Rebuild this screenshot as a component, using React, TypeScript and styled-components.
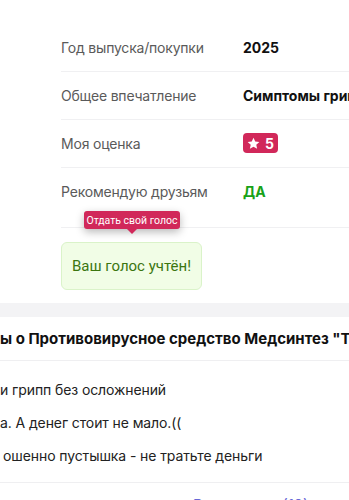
import React from "react";
import styled, { createGlobalStyle } from "styled-components";

const GlobalStyle = createGlobalStyle`
  html, body {
    margin: 0;
    padding: 0;
    background: #ffffff;
    overflow: hidden;
  }
  body {
    font-family: Inter, "Noto Sans", Arial, sans-serif;
    color: #1a1a1a;
  }
  * { box-sizing: border-box; }
`;

const Page = styled.div`
  width: 349px;
  height: 500px;
  overflow: hidden;
`;

const InfoSection = styled.section`
  padding: 24px 0 0 61px;
`;

const Row = styled.div<{ $pb?: number }>`
  display: grid;
  grid-template-columns: 182px 1fr;
  align-items: center;
  height: ${(p) => 48 + (p.$pb ?? 0)}px;
  padding-bottom: ${(p) => p.$pb ?? 0}px;
  border-bottom: 1px solid #f0f0f2;
  white-space: nowrap;
  overflow: hidden;
`;

const Label = styled.span`
  font-size: 14px;
  letter-spacing: -0.2px;
  color: #5a5a5a;
`;

const Value = styled.span<{ $color?: string }>`
  font-size: 14px;
  font-weight: 700;
  color: ${(p) => p.$color ?? "#111"};
`;

const Badge = styled.span`
  display: inline-flex;
  align-items: center;
  gap: 5px;
  height: 20px;
  width: 35px;
  padding: 0 4px;
  border-radius: 4px;
  background: #d1285a;
  color: #fff;
  font-size: 14px;
  font-weight: 700;
`;

const VoteArea = styled.div`
  position: relative;
  padding: 14px 0 0 61px;
`;

const VoteBox = styled.div`
  width: 141px;
  height: 48px;
  border: 1px solid #daf3c9;
  background: #f1fde6;
  border-radius: 6px;
  display: flex;
  align-items: center;
  justify-content: center;
  font-family: Roboto, Arial, sans-serif;
  font-size: 15px;
  color: #3b7610;
`;

const Tooltip = styled.div`
  position: absolute;
  left: 84px;
  top: -17px;
  height: 18px;
  width: 96px;
  display: flex;
  align-items: center;
  justify-content: center;
  border-radius: 3px;
  background: #d1285a;
  color: #fff;
  font-family: Roboto, Arial, sans-serif;
  font-size: 10.5px;
  white-space: nowrap;
  box-shadow: 0 3px 8px rgba(0, 0, 0, 0.28);
  &::after {
    content: "";
    position: absolute;
    left: 43px;
    bottom: -5px;
    border-left: 5px solid transparent;
    border-right: 5px solid transparent;
    border-top: 5px solid #d1285a;
  }
`;

const GreyBand = styled.div`
  margin-top: 13px;
  height: 14px;
  background: #f3f3f5;
`;

const ReviewHeading = styled.h2`
  margin: 0;
  height: 44px;
  display: flex;
  align-items: center;
  font-size: 15px;
  font-weight: 700;
  color: #111;
  white-space: nowrap;
  border-bottom: 1px solid #efeff1;
`;

const ReviewList = styled.ul`
  list-style: none;
  margin: 0;
  padding: 12px 0 10px;
  border-bottom: 1px solid #efeff1;
`;

const ReviewItem = styled.li<{ $indent?: number }>`
  height: 33px;
  display: flex;
  align-items: center;
  padding-left: ${(p) => p.$indent ?? 0}px;
  font-size: 14px;
  letter-spacing: -0.1px;
  color: #222;
  white-space: nowrap;
`;

const Footer = styled.div`
  padding: 12px 0 0 193px;
  font-size: 15px;
  color: #6767d6;
  white-space: nowrap;
`;

const Star = () => (
  <svg width="13" height="13" viewBox="0 0 24 24" fill="#fff" aria-hidden>
    <path d="M12 1.5l3.2 7 7.6.8-5.7 5.1 1.6 7.5L12 18l-6.7 3.9 1.6-7.5L1.2 9.3l7.6-.8z" />
  </svg>
);

export default function App() {
  return (
    <Page>
      <GlobalStyle />
      <InfoSection>
        <Row>
          <Label>Год выпуска/покупки</Label>
          <Value>2025</Value>
        </Row>
        <Row>
          <Label>Общее впечатление</Label>
          <Value>Симптомы гриппа сняты</Value>
        </Row>
        <Row>
          <Label>Моя оценка</Label>
          <span>
            <Badge>
              <Star />5
            </Badge>
          </span>
        </Row>
        <Row $pb={12}>
          <Label>Рекомендую друзьям</Label>
          <Value $color="#18a218">ДА</Value>
        </Row>
      </InfoSection>
      <VoteArea>
        <Tooltip>Отдать свой голос</Tooltip>
        <VoteBox>Ваш голос учтён!</VoteBox>
      </VoteArea>
      <GreyBand />
      <ReviewHeading>ы о Противовирусное средство Медсинтез "Триазавирин"</ReviewHeading>
      <ReviewList>
        <ReviewItem>и грипп без осложнений</ReviewItem>
        <ReviewItem>а. А денег стоит не мало.((</ReviewItem>
        <ReviewItem $indent={3}>ошенно пустышка - не тратьте деньги</ReviewItem>
      </ReviewList>
      <Footer>Все отзывы (12)</Footer>
    </Page>
  );
}
